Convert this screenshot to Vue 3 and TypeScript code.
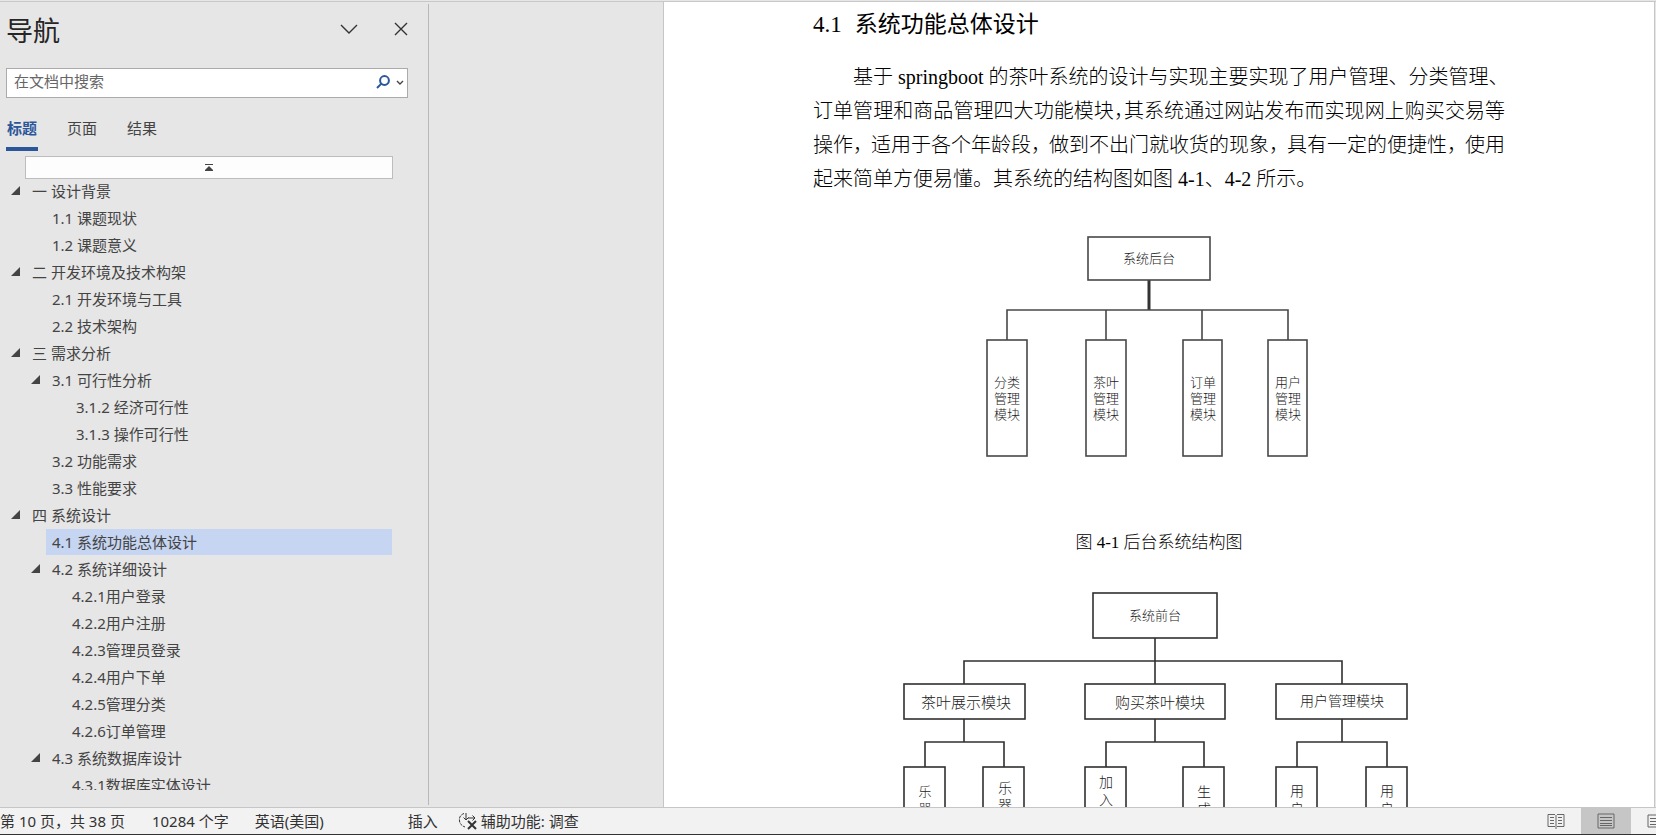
<script setup lang="ts">
import { ref } from 'vue'

interface Heading {
  text: string
  level: 1 | 2 | 3 | 4
  open?: boolean
}
interface Box { x: number; y: number; w: number; h: number }
interface Label { x: number; y: number; size: number; text: string }

const headings: Heading[] = [
  { text: '一 设计背景', level: 1, open: true },
  { text: '1.1 课题现状', level: 2 },
  { text: '1.2 课题意义', level: 2 },
  { text: '二 开发环境及技术构架', level: 1, open: true },
  { text: '2.1 开发环境与工具', level: 2 },
  { text: '2.2 技术架构', level: 2 },
  { text: '三 需求分析', level: 1, open: true },
  { text: '3.1 可行性分析', level: 2, open: true },
  { text: '3.1.2 经济可行性', level: 4 },
  { text: '3.1.3 操作可行性', level: 4 },
  { text: '3.2 功能需求', level: 2 },
  { text: '3.3 性能要求', level: 2 },
  { text: '四 系统设计', level: 1, open: true },
  { text: '4.1 系统功能总体设计', level: 2 },
  { text: '4.2 系统详细设计', level: 2, open: true },
  { text: '4.2.1用户登录', level: 3 },
  { text: '4.2.2用户注册', level: 3 },
  { text: '4.2.3管理员登录', level: 3 },
  { text: '4.2.4用户下单', level: 3 },
  { text: '4.2.5管理分类', level: 3 },
  { text: '4.2.6订单管理', level: 3 },
  { text: '4.3 系统数据库设计', level: 2, open: true },
  { text: '4.3.1数据库实体设计', level: 3 },
]
const selected = ref(13)
const tabs = ['标题', '页面', '结果']
const activeTab = ref(0)
const query = ref('')

const backBoxes: Box[] = [
  { x: 275, y: 7, w: 122, h: 43 },
  { x: 174, y: 110, w: 40, h: 116 },
  { x: 273, y: 110, w: 40, h: 116 },
  { x: 370, y: 110, w: 39, h: 116 },
  { x: 455, y: 110, w: 39, h: 116 },
]
const backLabels: Label[] = [
  { x: 336, y: 33, size: 13, text: '系统后台' },
  ...[
    { x: 194, name: '分类' },
    { x: 293, name: '茶叶' },
    { x: 390, name: '订单' },
    { x: 475, name: '用户' },
  ].flatMap(({ x, name }) =>
    [name, '管理', '模块'].map((text, i) => ({ x, y: 157 + i * 16, size: 13, text })),
  ),
]

const frontBoxes: Box[] = [
  { x: 280, y: 8, w: 124, h: 45 },
  { x: 91, y: 99, w: 121, h: 35 },
  { x: 272, y: 99, w: 140, h: 35 },
  { x: 463, y: 99, w: 131, h: 35 },
  ...[91, 170, 272, 370, 463, 553].map((x) => ({ x, y: 182, w: 41, h: 116 })),
]
const frontLabels: Label[] = [
  { x: 342, y: 35, size: 13, text: '系统前台' },
  { x: 153, y: 123, size: 15, text: '茶叶展示模块' },
  { x: 347, y: 123, size: 15, text: '购买茶叶模块' },
  { x: 529, y: 121, size: 14, text: '用户管理模块' },
  { x: 112, y: 211, size: 13, text: '乐' },
  { x: 112, y: 228, size: 13, text: '器' },
  { x: 192, y: 208, size: 14, text: '乐' },
  { x: 192, y: 225, size: 14, text: '器' },
  { x: 293, y: 202, size: 14, text: '加' },
  { x: 293, y: 220, size: 14, text: '入' },
  { x: 391, y: 212, size: 14, text: '生' },
  { x: 391, y: 229, size: 14, text: '成' },
  { x: 484, y: 211, size: 14, text: '用' },
  { x: 484, y: 229, size: 14, text: '户' },
  { x: 574, y: 211, size: 14, text: '用' },
  { x: 574, y: 229, size: 14, text: '户' },
]
</script>

<template>
  <div class="app">
    <div class="workspace">
      <aside class="pane">
        <header class="pane-head">
          <h1>导航</h1>
          <button class="icon-btn" type="button" aria-label="任务窗格选项">
            <svg width="18" height="10" viewBox="0 0 18 10"><path d="M1 1l8 8 8-8" /></svg>
          </button>
          <button class="icon-btn" type="button" aria-label="关闭">
            <svg width="14" height="14" viewBox="0 0 14 14"><path d="M1 1l12 12M13 1L1 13" /></svg>
          </button>
        </header>

        <form class="search" role="search" @submit.prevent>
          <input v-model="query" type="text" placeholder="在文档中搜索" aria-label="在文档中搜索" />
          <button class="find" type="submit" aria-label="搜索">
            <svg width="14" height="14" viewBox="0 0 14 14"><circle cx="8.5" cy="5.5" r="4.4" /><path d="M5.4 8.6L1 13" /></svg>
          </button>
          <button class="more" type="button" aria-label="搜索选项">
            <svg width="8" height="6" viewBox="0 0 8 6"><path d="M1 1l3 3 3-3" /></svg>
          </button>
        </form>

        <div class="tabs" role="tablist">
          <button
            v-for="(tab, i) in tabs"
            :key="tab"
            type="button"
            role="tab"
            :aria-selected="activeTab === i"
            :class="{ active: activeTab === i }"
            @click="activeTab = i"
          >{{ tab }}</button>
        </div>

        <button class="to-top" type="button" aria-label="跳转到文档开头">
          <svg width="8" height="8" viewBox="0 0 8 8"><path d="M0 0h8v1H0zM4 2l4 4v1H0V6z" /></svg>
        </button>

        <ul class="tree">
          <li v-for="(item, i) in headings" :key="item.text" :class="['lv' + item.level, { selected: selected === i }]">
            <span class="twist">
              <svg v-if="item.open" width="9" height="9" viewBox="0 0 9 9"><path d="M9 0v9H0z" /></svg>
            </span>
            <button type="button" @click="selected = i">{{ item.text }}</button>
          </li>
        </ul>
      </aside>

      <main class="canvas">
        <article class="page">
          <h2>4.1<span>系统功能总体设计</span></h2>
          <p>
            <span class="line first">基于 springboot 的茶叶系统的设计与实现主要实现了用户管理、分类管理、</span>
            <span class="line full">订单管理和商品管理四大功能模块<span class="half">，</span>其系统通过网站发布而实现网上购买交易等</span>
            <span class="line">操作<span class="comma">，</span>适用于各个年龄段<span class="comma">，</span>做到不出门就收货的现象<span class="comma">，</span>具有一定的便捷性<span class="comma">，</span>使用</span>
            <span class="line">起来简单方便易懂。其系统的结构图如图 4-1、4-2 所示。</span>
          </p>

          <figure>
            <svg class="chart" width="692" height="230" viewBox="0 0 692 230" role="img" aria-label="后台系统结构图">
              <path class="wire thick" d="M336 50v30" />
              <path class="wire" d="M194 110V80h281v30M293 80v30M389 80v30" />
              <rect v-for="(b, i) in backBoxes" :key="'b' + i" :x="b.x" :y="b.y" :width="b.w" :height="b.h" />
              <text v-for="(t, i) in backLabels" :key="'t' + i" :x="t.x" :y="t.y" :font-size="t.size">{{ t.text }}</text>
            </svg>
            <figcaption>图 4-1 后台系统结构图</figcaption>
          </figure>

          <figure class="second">
            <svg class="chart dark" width="692" height="300" viewBox="0 0 692 300" role="img" aria-label="前台系统结构图">
              <path class="wire" d="M342 53v46M151 99V76h378v23" />
              <path class="wire" d="M151 134v23M112 182v-25h79v25M342 134v23M293 182v-25h98v25M529 134v23M484 182v-25h90v25" />
              <rect v-for="(b, i) in frontBoxes" :key="'b' + i" :x="b.x" :y="b.y" :width="b.w" :height="b.h" />
              <text v-for="(t, i) in frontLabels" :key="'t' + i" :x="t.x" :y="t.y" :font-size="t.size">{{ t.text }}</text>
            </svg>
          </figure>
        </article>
      </main>
    </div>

    <footer class="status">
      <span class="pages">第 10 页，共 38 页</span>
      <span class="words">10284 个字</span>
      <span class="lang">英语(美国)</span>
      <span class="mode">插入</span>
      <button class="access" type="button">
        <svg width="20" height="18" viewBox="0 0 20 18">
          <path class="dash" d="M6 1.500C2 3 1 6 1.500 9c.5 3 2.500 5 5.500 6" />
          <path d="M8 1v7M5.500 5.500L8 8l2.500-2.500M10 6h7M14.500 3.500L17 6l-2.500 2.500" />
          <path class="cross" d="M10 9l8 8M18 9l-8 8" />
        </svg>
        辅助功能: 调查
      </button>
      <div class="views">
        <button type="button" aria-label="阅读视图">
          <svg width="18" height="16" viewBox="0 0 18 16">
            <path d="M8 1.500H1v12h7M10 1.500h7v12h-7M9 2v14M3 4.500h4M3 7.500h4M3 10.500h4M11 4.500h4M11 7.500h4M11 10.500h4" />
          </svg>
        </button>
        <button class="on" type="button" aria-label="页面视图">
          <svg width="18" height="16" viewBox="0 0 18 16">
            <path d="M1 1h16v14H1zM3 4.500h12M3 7.500h12M3 10.500h12M3 12.500h12" />
          </svg>
        </button>
        <button class="web" type="button" aria-label="Web 版式视图">
          <svg width="18" height="16" viewBox="0 0 18 16">
            <path d="M1 2h16v12H1zM3 5.500h9M3 8.500h9M3 11.500h9" />
          </svg>
        </button>
      </div>
    </footer>
  </div>
</template>

<style>
body {
  margin: 0;
  overflow: hidden;
}
</style>

<style scoped>
.app {
  box-sizing: border-box;
  display: flex;
  flex-direction: column;
  height: 100vh;
  overflow: hidden;
  border-bottom: 1px solid #333;
  background: #e6e6e6;
  color: #444;
  font: 15px/20px "Noto Sans", "Noto Sans CJK SC", sans-serif;
}
button {
  padding: 0;
  border: 0;
  background: none;
  color: inherit;
  font: inherit;
}
svg {
  display: block;
  flex: none;
  fill: none;
  stroke: currentColor;
}
.workspace {
  display: flex;
  flex: 1;
  min-height: 0;
  margin-top: 1px;
  border-top: 1px solid #c8c8c8;
}

.pane {
  box-sizing: border-box;
  display: flex;
  flex-direction: column;
  width: 429px;
  margin: 2px 0;
  padding-bottom: 15px;
  border-right: 1px solid #b8b8b8;
}
.pane-head {
  display: flex;
  align-items: center;
  gap: 36px;
  height: 50px;
  padding: 0 20px 0 6px;
}
.pane-head h1 {
  flex: 1;
  margin: 0;
  padding-top: 4px;
  color: #262626;
  font-size: 27px;
  font-weight: 400;
  line-height: 40px;
}
.icon-btn {
  color: #333;
}
.icon-btn svg {
  stroke-width: 1.4;
}
.search {
  box-sizing: border-box;
  display: flex;
  align-items: center;
  height: 30px;
  margin: 14px 20px 0 6px;
  border: 1px solid #ababab;
  background: #fff;
}
.search input {
  flex: 1;
  min-width: 0;
  height: 26px;
  padding: 0 7px 4px;
  border: 0;
  outline: 0;
  background: none;
  font: inherit;
}
.search input::placeholder {
  color: #666;
}
.find {
  margin-right: 6px;
  padding-bottom: 2px;
  color: #2b579a;
}
.find svg {
  stroke-width: 2;
}
.more {
  margin-right: 3px;
}
.more svg {
  stroke-width: 1.4;
}
.tabs {
  display: flex;
  gap: 28px;
  margin: 20px 0 0 6px;
}
.tabs button {
  width: 32px;
  height: 33px;
  padding-bottom: 9px;
  border-bottom: 4px solid transparent;
  white-space: nowrap;
}
.tabs .active {
  border-color: #2b579a;
  color: #2b579a;
  font-weight: 700;
}
.to-top {
  box-sizing: border-box;
  display: flex;
  flex: none;
  align-items: center;
  justify-content: center;
  height: 23px;
  margin: 5px 35px 0 25px;
  border: 1px solid #bdbdbd;
  background: #fdfdfd;
}
.to-top svg {
  fill: #444;
  stroke: none;
}
.tree {
  flex: 1;
  min-height: 0;
  margin: -2px 0 0;
  padding: 0 36px 0 6px;
  overflow: hidden;
  list-style: none;
}
.tree li {
  display: flex;
  align-items: center;
  height: 27px;
}
.tree .twist {
  flex: none;
  width: 20px;
  padding-left: 5px;
  box-sizing: border-box;
}
.twist svg {
  fill: #444;
  stroke: none;
}
.tree button {
  flex: 1;
  height: 26px;
  padding-left: 6px;
  text-align: left;
  white-space: nowrap;
}
.lv2 {
  padding-left: 20px;
}
.lv3 {
  padding-left: 40px;
}
.lv4 {
  padding-left: 44px;
}
.selected button {
  background: #c5d5f2;
}

.canvas {
  display: flex;
  flex: 1;
  min-width: 0;
  padding: 0 1px 0 234px;
}
.page {
  flex: 1;
  min-width: 0;
  padding: 6px 149px 0;
  overflow: hidden;
  border: solid #c6c6c6;
  border-width: 0 1px;
  background: #fff;
  color: #000;
  font-family: "Liberation Serif", "Noto Sans CJK SC", serif;
}
.page h2 {
  display: flex;
  gap: 13px;
  margin: 0 0 18px;
  font-size: 23px;
  font-weight: 400;
  line-height: 34px;
}
.page p {
  margin: 0;
  font-size: 20px;
  font-weight: 300;
  line-height: 34px;
}
.line {
  display: block;
  white-space: nowrap;
}
.first {
  padding-left: 40px;
}
.full {
  text-align: justify;
  text-align-last: justify;
}
.half {
  font-feature-settings: "halt";
}
.comma {
  display: inline-block;
  width: 18px;
}
figure {
  margin: 34px 0 0;
}
figure.second {
  margin-top: 25px;
}
figcaption {
  margin-top: 66px;
  font-size: 17px;
  font-weight: 300;
  line-height: 34px;
  text-align: center;
}
.chart {
  margin: 0 auto;
  stroke: #484848;
  stroke-width: 1.6;
}
.chart.dark {
  stroke: #303030;
}
.chart rect {
  fill: #fff;
}
.chart .thick {
  stroke: #333;
  stroke-width: 3;
}
.chart text {
  fill: #222;
  stroke: none;
  font-family: "Noto Sans CJK SC", sans-serif;
  font-weight: 300;
  text-anchor: middle;
}

.status {
  display: flex;
  flex: none;
  align-items: center;
  height: 26px;
  border-top: 1px solid #c6c6c6;
  background: #f2f2f2;
  color: #333;
  white-space: nowrap;
}
.words {
  margin-left: 27px;
}
.lang {
  margin-left: 26px;
}
.mode {
  margin-left: 84px;
}
.access {
  display: flex;
  align-items: center;
  gap: 3px;
  margin-left: 20px;
}
.access .dash {
  stroke-dasharray: 3 1;
}
.access .cross {
  stroke-width: 2;
}
.views {
  display: flex;
  align-self: stretch;
  margin-left: auto;
  color: #666;
}
.views button {
  display: flex;
  align-items: center;
  justify-content: center;
  width: 50px;
}
.views .on {
  background: #c6c6c6;
}
.views .web {
  justify-content: flex-start;
  width: 25px;
  padding-left: 16px;
  box-sizing: border-box;
  overflow: hidden;
}
</style>
